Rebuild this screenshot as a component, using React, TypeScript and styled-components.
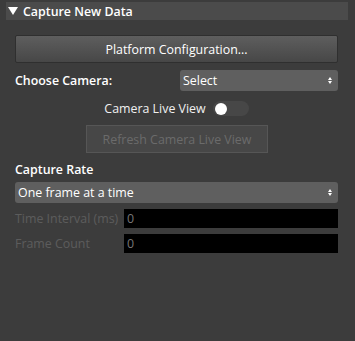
import React, { useState } from 'react';
import styled, { createGlobalStyle } from 'styled-components';

const GlobalStyle = createGlobalStyle`
    html, body {
        margin: 0;
        padding: 0;
        background: #3c3c3c;
    }
    body {
        font-family: "Open Sans", "Noto Sans", sans-serif;
        font-size: 12.4px;
        color: #f0f0f0;
    }
`;

const Panel = styled.div`
    width: 355px;
    height: 341px;
    box-sizing: border-box;
    padding: 2px 7px 0 6px;
    background: #3c3c3c;
`;

const Header = styled.div`
    height: 18px;
    display: flex;
    align-items: center;
    gap: 5px;
    padding-left: 2px;
    background: #4b4b4b;
    font-weight: 600;
    color: #ffffff;
`;

const Triangle = styled.span`
    width: 0;
    height: 0;
    border-left: 5px solid transparent;
    border-right: 5px solid transparent;
    border-top: 8px solid #ffffff;
`;

const Body = styled.div`
    padding: 15px 10px 0 9px;
    display: flex;
    flex-direction: column;
`;

const GradientButton = styled.button`
    height: 28px;
    width: 100%;
    box-sizing: border-box;
    border: 1px solid #2f2f2f;
    border-radius: 2px;
    background: linear-gradient(#5e5e5e, #474747);
    color: #ffffff;
    font-family: inherit;
    font-size: inherit;
`;

const Row = styled.div<{ $top?: number }>`
    display: flex;
    align-items: center;
    margin-top: ${p => p.$top ?? 0}px;
`;

const Label = styled.div`
    font-weight: 600;
    color: #ffffff;
    white-space: nowrap;
`;

const SelectBox = styled.div<{ $width?: string }>`
    height: 21px;
    width: ${p => p.$width ?? '100%'};
    box-sizing: border-box;
    margin-left: auto;
    padding: 0 6px 0 3px;
    display: flex;
    align-items: center;
    justify-content: space-between;
    background: #5f5f5f;
    border-radius: 3px;
    color: #ffffff;
`;

const Arrows = styled.span`
    display: flex;
    flex-direction: column;
    gap: 1px;
    &::before, &::after {
        content: '';
        width: 0;
        height: 0;
        border-left: 2.5px solid transparent;
        border-right: 2.5px solid transparent;
    }
    &::before { border-bottom: 3px solid #ffffff; }
    &::after { border-top: 3px solid #ffffff; }
`;

const Center = styled.div`
    display: flex;
    justify-content: center;
    align-items: center;
    gap: 7px;
    margin-top: 9px;
`;

const Toggle = styled.button<{ $on: boolean }>`
    width: 36px;
    height: 15px;
    padding: 0 2px;
    border: none;
    border-radius: 8px;
    background: #474747;
    display: flex;
    align-items: center;
    justify-content: ${p => (p.$on ? 'flex-end' : 'flex-start')};
    &::after {
        content: '';
        width: 12px;
        height: 12px;
        border-radius: 50%;
        background: #ffffff;
    }
`;

const DisabledButton = styled.button`
    width: 182px;
    height: 28px;
    box-sizing: border-box;
    margin: 8px 0 0 71px;
    border: 1px solid #565656;
    background: #474747;
    color: #6b6b6b;
    font-family: inherit;
    font-size: inherit;
`;

const FieldLabel = styled.div`
    width: 109px;
    color: #5c5c5c;
    white-space: nowrap;
`;

const FieldInput = styled.input`
    flex: 1;
    height: 19px;
    box-sizing: border-box;
    border: none;
    padding: 0 3px;
    background: #000000;
    color: #777777;
    font-family: inherit;
    font-size: inherit;
    outline: none;
`;

export default function App() {
    const [live, setLive] = useState(false);

    return (
        <Panel>
            <GlobalStyle />
            <Header>
                <Triangle />
                Capture New Data
            </Header>
            <Body>
                <GradientButton>Platform Configuration...</GradientButton>
                <Row $top={7}>
                    <Label>Choose Camera:</Label>
                    <SelectBox $width="158px">
                        Select
                        <Arrows />
                    </SelectBox>
                </Row>
                <Center>
                    Camera Live View
                    <Toggle $on={live} onClick={() => setLive(o => !o)} />
                </Center>
                <DisabledButton disabled>Refresh Camera Live View</DisabledButton>
                <Row $top={8}>
                    <Label>Capture Rate</Label>
                </Row>
                <Row $top={4}>
                    <SelectBox>
                        One frame at a time
                        <Arrows />
                    </SelectBox>
                </Row>
                <Row $top={6}>
                    <FieldLabel>Time Interval (ms)</FieldLabel>
                    <FieldInput defaultValue="0" />
                </Row>
                <Row $top={6}>
                    <FieldLabel>Frame Count</FieldLabel>
                    <FieldInput defaultValue="0" />
                </Row>
            </Body>
        </Panel>
    );
}
